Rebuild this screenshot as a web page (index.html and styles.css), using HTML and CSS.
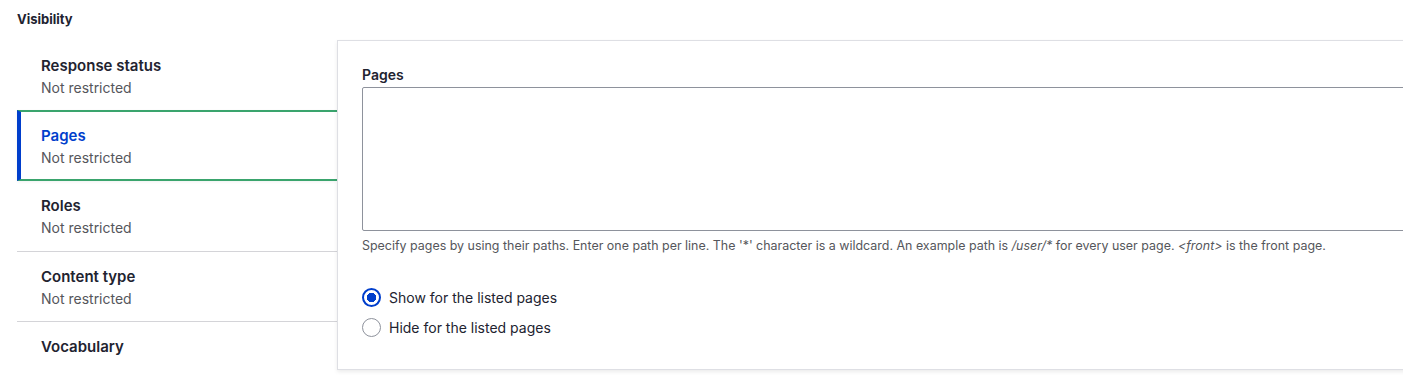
FILE: index.html
```html
<!DOCTYPE html>
<html lang="en">
<head>
  <meta charset="UTF-8">
  <title>Visibility</title>
  <link rel="stylesheet" href="styles.css">
</head>
<body>
  <div class="visibility">
    <h3 class="section-title">Visibility</h3>

    <div class="vtabs">
      <ul class="vtabs-menu">
        <li class="vtab">
          <span class="vtab-title">Response status</span>
          <span class="vtab-summary">Not restricted</span>
        </li>
        <li class="vtab is-active">
          <span class="vtab-title">Pages</span>
          <span class="vtab-summary">Not restricted</span>
        </li>
        <li class="vtab">
          <span class="vtab-title">Roles</span>
          <span class="vtab-summary">Not restricted</span>
        </li>
        <li class="vtab has-line">
          <span class="vtab-title">Content type</span>
          <span class="vtab-summary">Not restricted</span>
        </li>
        <li class="vtab has-line">
          <span class="vtab-title">Vocabulary</span>
        </li>
      </ul>

      <div class="vtabs-pane">
        <label class="field-label" for="pages">Pages</label>
        <textarea id="pages" class="field-textarea"></textarea>
        <div class="field-description">
          Specify pages by using their paths. Enter one path per line. The '*' character is a wildcard. An example path is <em>/user/*</em> for every user page. <em>&lt;front&gt;</em> is the front page.
        </div>

        <div class="radios">
          <label class="radio"><input type="radio" name="negate" value="0" checked> Show for the listed pages</label>
          <label class="radio"><input type="radio" name="negate" value="1"> Hide for the listed pages</label>
        </div>
      </div>
    </div>
  </div>
</body>
</html>
```

FILE: styles.css
```css
html, body { margin: 0; padding: 0; background: #fff; overflow: hidden; }
body { font-family: Inter, "Noto Sans", sans-serif; color: #222330; }
.visibility { padding: 10px 0 0 17px; }
.section-title { margin: 0; font-size: 13px; font-weight: 700; line-height: 18px; color: #222330; }

.vtabs { display: flex; margin-top: 12px; width: 1420px; }
.vtabs-menu { list-style: none; margin: 0; padding: 0; width: 320px; flex: none; }
.vtab { display: flex; flex-direction: column; padding: 13px 0 13px 24px; height: 44px; }
.vtab:first-child { padding: 14px 0 12px 24px; }
.vtab.has-line { border-top: 1px solid #d4d4d8; height: 43px; }
.vtab.is-active { border-top: 2px solid #3aa46d; border-bottom: 2px solid #3aa46d; border-left: 4px solid #003ecc; padding: 12px 0 10px 20px; height: 45px; box-shadow: 0 1px 3px rgba(0,0,0,0.06); }
.vtab-title { font-size: 15px; font-weight: 600; line-height: 24px; color: #222330; }
.vtab.is-active .vtab-title { color: #003ecc; }
.vtab-summary { font-size: 14px; line-height: 20px; color: #55565b; }

.vtabs-pane { flex: 1; height: 330px; box-sizing: border-box; border: 1px solid #dedfe4; padding: 24px 24px 0 24px; box-shadow: 0 2px 4px rgba(0,0,0,0.08); }
.field-label { display: block; font-size: 14px; font-weight: 600; line-height: 20px; margin-bottom: 2px; }
.field-textarea { display: block; width: 100%; box-sizing: border-box; height: 144px; border: 1px solid #8e929c; border-radius: 2px; background: #fff; resize: none; margin: 0; }
.field-description { font-size: 12.45px; line-height: 18px; color: #55565b; margin-top: 6px; }

.radios { margin-top: 33px; display: flex; flex-direction: column; gap: 11px; }
.radio { display: flex; align-items: center; gap: 8px; font-size: 14px; line-height: 19px; color: #222330; }
.radio input { appearance: none; -webkit-appearance: none; margin: 0; width: 19px; height: 19px; box-sizing: border-box; border: 1px solid #8e929c; border-radius: 50%; background: #fff; }
.radio input:checked { border: 2px solid #003ecc; background: radial-gradient(circle, #003ecc 0 4.5px, #fff 5px); }
```
